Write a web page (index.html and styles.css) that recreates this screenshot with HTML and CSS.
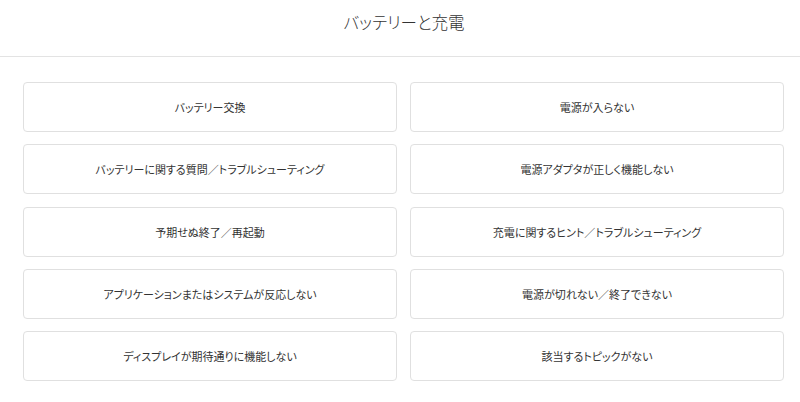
FILE: index.html
```html
<!DOCTYPE html>
<html lang="ja">
<head>
<meta charset="utf-8">
<title>バッテリーと充電</title>
<link rel="stylesheet" href="styles.css">
</head>
<body>
<header class="header">
  <h1 class="title">バッテリーと充電</h1>
</header>
<main class="grid">
  <a class="card" href="#">バッテリー交換</a>
  <a class="card" href="#">電源が入らない</a>
  <a class="card" href="#">バッテリーに関する質問／トラブルシューティング</a>
  <a class="card" href="#">電源アダプタが正しく機能しない</a>
  <a class="card" href="#">予期せぬ終了／再起動</a>
  <a class="card" href="#">充電に関するヒント／トラブルシューティング</a>
  <a class="card" href="#">アプリケーションまたはシステムが反応しない</a>
  <a class="card" href="#">電源が切れない／終了できない</a>
  <a class="card" href="#">ディスプレイが期待通りに機能しない</a>
  <a class="card" href="#">該当するトピックがない</a>
</main>
</body>
</html>
```

FILE: styles.css
```css
* { box-sizing: border-box; }
html, body {
  margin: 0;
  padding: 0;
  background: #fff;
  font-family: "Noto Sans CJK JP", "Noto Sans", sans-serif;
  font-feature-settings: "palt";
  color: #333;
}
.header {
  height: 57px;
  border-bottom: 1px solid #e3e3e3;
  display: flex;
  justify-content: center;
  padding-top: 9px;
  padding-left: 8px;
}
.title {
  margin: 0;
  font-size: 16.5px;
  font-weight: 300;
  line-height: 26px;
  color: #333;
}
.grid {
  display: grid;
  grid-template-columns: 374px 374px;
  column-gap: 13px;
  row-gap: 12.25px;
  margin: 25px 0 0 23px;
}
.card {
  height: 50px;
  border: 1px solid #e0e0e0;
  border-radius: 4px;
  display: flex;
  align-items: center;
  justify-content: center;
  font-size: 11px;
  color: #333;
  text-decoration: none;
}
```
